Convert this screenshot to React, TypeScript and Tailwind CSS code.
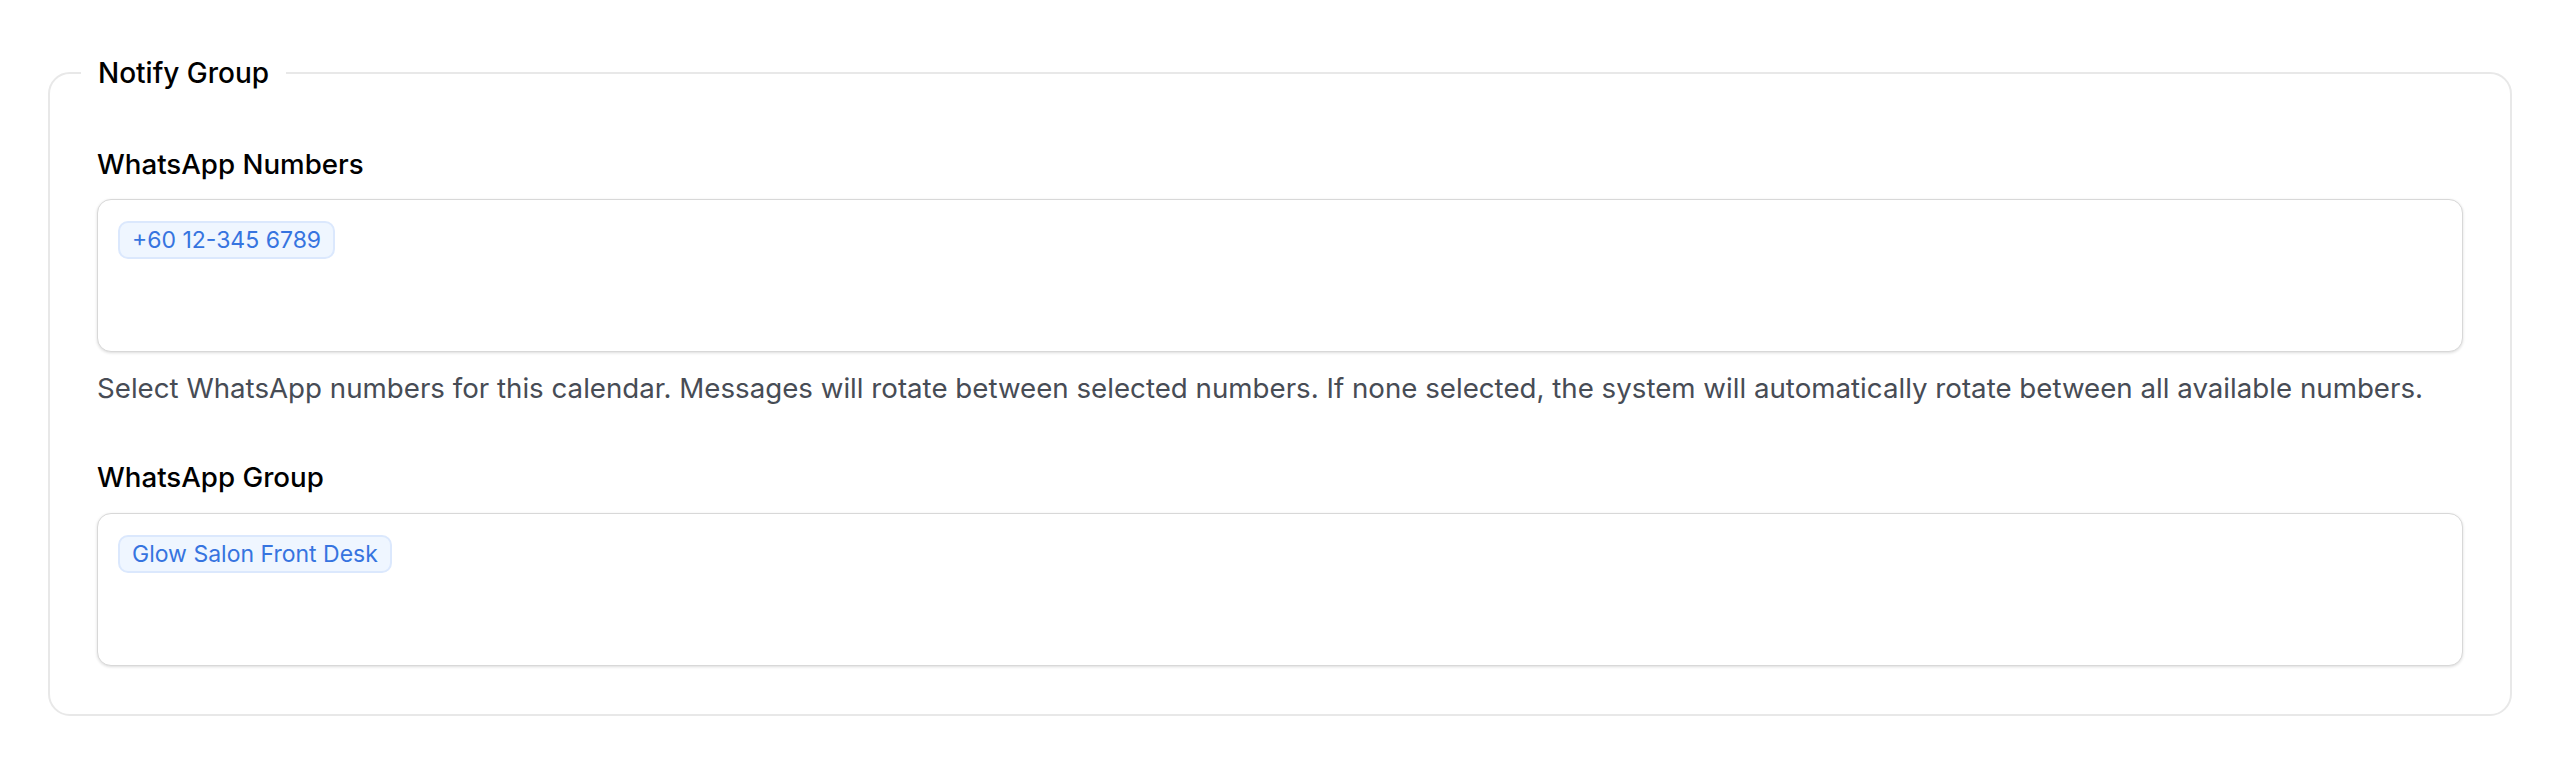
const numbers = ["+60 12-345 6789"];
const groups = ["Glow Salon Front Desk"];

function Chip({ label }: { label: string }) {
  return (
    <span className="inline-flex h-[38px] items-center rounded-[10px] border-2 border-[#dbe8fd] bg-[#eff6ff] px-[12px] text-[23px] leading-none text-[#3674e0]">
      {label}
    </span>
  );
}

function ChipBox({ items }: { items: string[] }) {
  return (
    <div className="flex h-[153px] flex-wrap content-start gap-2 rounded-[14px] border border-[#d8d8d8] bg-white px-[20px] py-[21px] shadow-[0_1px_3px_rgba(0,0,0,0.14)]">
      {items.map((item) => (
        <Chip key={item} label={item} />
      ))}
    </div>
  );
}

export default function App() {
  return (
    <div className="min-h-screen bg-white pt-[55px] font-['Inter',sans-serif]">
      <fieldset className="mx-[48px] rounded-[22px] border-2 border-[#e8e8e8] px-[47px] pb-[48px] pt-[55px]">
        <legend className="-ml-[16px] px-[17px] text-[28px] leading-[36px] font-medium text-black">
          Notify Group
        </legend>

        <label className="block text-[27.7px] leading-[36px] font-medium text-black">
          WhatsApp Numbers
        </label>
        <div className="mt-[17px]">
          <ChipBox items={numbers} />
        </div>
        <p className="mt-[18px] text-[27.7px] leading-[36px] text-[#474c55]">
          Select WhatsApp numbers for this calendar. Messages will rotate between selected numbers. If none selected, the system will automatically rotate between all available numbers.
        </p>

        <label className="mt-[53px] block text-[27.7px] leading-[36px] font-medium text-black">
          WhatsApp Group
        </label>
        <div className="mt-[18px]">
          <ChipBox items={groups} />
        </div>
      </fieldset>
    </div>
  );
}
